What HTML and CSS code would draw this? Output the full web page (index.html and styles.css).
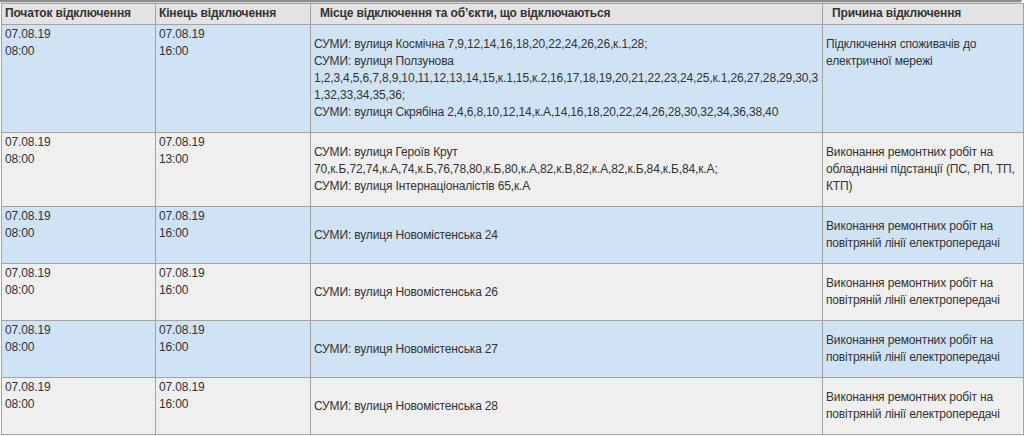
FILE: index.html
```html
<!DOCTYPE html>
<html lang="uk">
<head>
    <meta charset="UTF-8">
    <title>Графік відключень</title>
    <link rel="stylesheet" href="styles.css">
</head>
<body>

    <div class="frame-top"></div>

    <table class="outages">
        <colgroup>
            <col class="c-start">
            <col class="c-end">
            <col class="c-place">
            <col class="c-reason">
        </colgroup>
        <thead>
            <tr>
                <th>Початок відключення</th>
                <th>Кінець відключення</th>
                <th class="wide">Місце відключення та об’єкти, що відключаються</th>
                <th class="wide">Причина відключення</th>
            </tr>
        </thead>
        <tbody>
            <tr class="odd">
                <td>07.08.19<br>08:00</td>
                <td>07.08.19<br>16:00</td>
                <td class="place"><p>СУМИ: вулиця Космічна 7,9,12,14,16,18,20,22,24,26,26,к.1,28;<br>СУМИ: вулиця Ползунова 1,2,3,4,5,6,7,8,9,10,11,12,13,14,15,к.1,15,к.2,16,17,18,19,20,21,22,23,24,25,к.1,26,27,28,29,30,31,32,33,34,35,36;<br>СУМИ: вулиця Скрябіна 2,4,6,8,10,12,14,к.А,14,16,18,20,22,24,26,28,30,32,34,36,38,40</p></td>
                <td class="reason"><p>Підключення споживачів до електричної мережі</p></td>
            </tr>
            <tr class="even">
                <td>07.08.19<br>08:00</td>
                <td>07.08.19<br>13:00</td>
                <td class="place"><p>СУМИ: вулиця Героїв Крут 70,к.Б,72,74,к.А,74,к.Б,76,78,80,к.Б,80,к.А,82,к.В,82,к.А,82,к.Б,84,к.Б,84,к.А;<br>СУМИ: вулиця Інтернаціоналістів 65,к.А</p></td>
                <td class="reason"><p>Виконання ремонтних робіт на обладнанні підстанції (ПС, РП, ТП, КТП)</p></td>
            </tr>
            <tr class="odd">
                <td>07.08.19<br>08:00</td>
                <td>07.08.19<br>16:00</td>
                <td class="place"><p>СУМИ: вулиця Новомістенська 24</p></td>
                <td class="reason"><p>Виконання ремонтних робіт на повітряній лінії електропередачі</p></td>
            </tr>
            <tr class="even">
                <td>07.08.19<br>08:00</td>
                <td>07.08.19<br>16:00</td>
                <td class="place"><p>СУМИ: вулиця Новомістенська 26</p></td>
                <td class="reason"><p>Виконання ремонтних робіт на повітряній лінії електропередачі</p></td>
            </tr>
            <tr class="odd">
                <td>07.08.19<br>08:00</td>
                <td>07.08.19<br>16:00</td>
                <td class="place"><p>СУМИ: вулиця Новомістенська 27</p></td>
                <td class="reason"><p>Виконання ремонтних робіт на повітряній лінії електропередачі</p></td>
            </tr>
            <tr class="even">
                <td>07.08.19<br>08:00</td>
                <td>07.08.19<br>16:00</td>
                <td class="place"><p>СУМИ: вулиця Новомістенська 28</p></td>
                <td class="reason"><p>Виконання ремонтних робіт на повітряній лінії електропередачі</p></td>
            </tr>
        </tbody>
    </table>

</body>
</html>
```

FILE: styles.css
```css
body {
    margin: 0;
    background: white;
    font-family: "Liberation Sans", Arial, sans-serif;
    font-size: 12px;
    line-height: 17px;
    letter-spacing: -0.15px;
    color: #333;
}
.frame-top {
    height: 2px;
    margin-right: 6px;
    background: #8c8c8c;
    border-bottom: 1px solid #d8d8d8;
    border-bottom-right-radius: 4px;
}
.outages {
    border-collapse: collapse;
    table-layout: fixed;
    width: 1022px;
    margin-left: 1px;
}
.c-start { width: 154px; }
.c-end { width: 155px; }
.c-place { width: 512px; }
.c-reason { width: 201px; }
th, td {
    border: 1px solid #a3a3a3;
    padding: 1px 3px;
    text-align: left;
}
th {
    background: #e3e3e3;
    font-weight: bold;
    padding: 1px 3px 2px;
}
th.wide {
    padding-left: 9px;
}
td {
    vertical-align: top;
}
td p {
    margin: 10px 0;
}
td.place {
    vertical-align: middle;
    overflow-wrap: break-word;
}
tr.odd td {
    background: #d0e3f5;
}
tr.even td {
    background: #efefef;
}
```
